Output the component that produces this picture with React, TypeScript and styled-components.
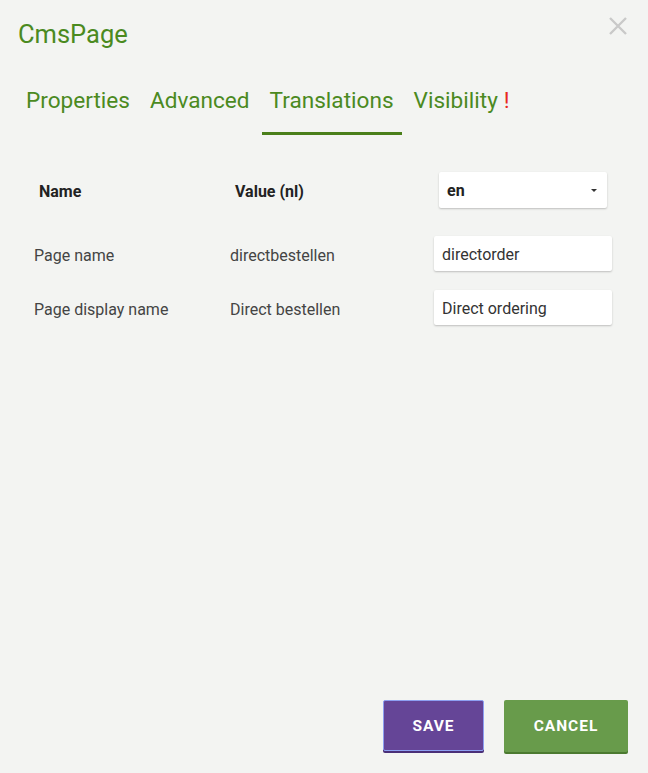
import React from "react";
import styled, { createGlobalStyle } from "styled-components";

const Global = createGlobalStyle`
  html, body { margin: 0; padding: 0; background: #f3f4f2; }
  body { font-family: Roboto, "Liberation Sans", sans-serif; }
`;

const Dialog = styled.div`
  height: 773px;
  box-sizing: border-box;
  display: flex;
  flex-direction: column;
  background: #f3f4f2;
`;

const Header = styled.div`
  display: flex;
  justify-content: space-between;
  align-items: flex-start;
  padding: 17px 21px 0 18px;
  height: 60px;
  box-sizing: border-box;
`;

const Title = styled.h1`
  margin: 0;
  font-weight: 400;
  font-size: 25.5px;
  line-height: 34px;
  color: #4b8a1f;
`;

const CloseButton = styled.button`
  border: 0;
  background: none;
  padding: 0;
  width: 18px;
  height: 18px;
  cursor: pointer;
  display: block;
`;

const Tabs = styled.div`
  display: flex;
  gap: 4px;
  padding: 20px 0 0 18px;
`;

const Tab = styled.div<{ $active?: boolean }>`
  padding: 1px 8px 0;
  height: 55px;
  box-sizing: border-box;
  font-size: 22.6px;
  line-height: 40px;
  color: #4b8a1f;
  border-bottom: 3px solid ${(p) => (p.$active ? "#4a7f1a" : "transparent")};
`;

const Alert = styled.span`
  color: #e8281e;
  margin-left: 6px;
`;

const Table = styled.div`
  padding: 37px 36px 0 34px;
  display: flex;
  flex-direction: column;
`;

const Row = styled.div<{ $head?: boolean }>`
  display: grid;
  grid-template-columns: 196px 204px 1fr;
  align-items: center;
  height: ${(p) => (p.$head ? "36px" : "35px")};
  margin-bottom: ${(p) => (p.$head ? "28px" : "19px")};
`;

const HeadCell = styled.div`
  padding-left: 5px;
  padding-top: 2px;
  font-weight: 700;
  font-size: 16px;
  color: #222;
`;

const Cell = styled.div`
  padding-top: 3px;
  font-size: 16px;
  color: #444;
`;

const Select = styled.div`
  margin-left: 5px;
  width: 168px;
  height: 36px;
  box-sizing: border-box;
  background: #fff;
  box-shadow: 0 1px 2px rgba(0, 0, 0, 0.22);
  border-radius: 2px;
  display: flex;
  align-items: center;
  justify-content: space-between;
  padding: 1px 10px 0 8px;
  font-weight: 700;
  font-size: 16px;
  color: #222;
`;

const Caret = styled.span`
  width: 0;
  height: 0;
  border-left: 3px solid transparent;
  border-right: 3px solid transparent;
  border-top: 3px solid #333;
`;

const Input = styled.input`
  width: 178px;
  height: 35px;
  box-sizing: border-box;
  border: 0;
  outline: none;
  background: #fff;
  box-shadow: 0 1px 2px rgba(0, 0, 0, 0.22);
  border-radius: 2px;
  padding: 1px 8px 0;
  font-family: Roboto, "Liberation Sans", sans-serif;
  font-size: 16px;
  color: #333;
`;

const Footer = styled.div`
  margin-top: auto;
  display: flex;
  justify-content: flex-end;
  gap: 20px;
  padding: 0 20px 21px 0;
`;

const Button = styled.button<{ $kind: "save" | "cancel" }>`
  height: ${(p) => (p.$kind === "save" ? "51px" : "52px")};
  width: ${(p) => (p.$kind === "save" ? "101px" : "124px")};
  box-sizing: border-box;
  border: ${(p) => (p.$kind === "save" ? "1px solid #8d9ff2" : "0")};
  border-radius: 2px;
  background: ${(p) => (p.$kind === "save" ? "#654597" : "#689b4b")};
  box-shadow: 0 2px 0 ${(p) => (p.$kind === "save" ? "#4a2f78" : "#4b7a30")};
  color: #fff;
  font-family: Roboto, "Liberation Sans", sans-serif;
  font-weight: 700;
  font-size: 15.5px;
  letter-spacing: 1px;
  text-transform: uppercase;
  cursor: pointer;
`;

export default function App() {
  return (
    <>
      <Global />
      <Dialog>
        <Header>
          <Title>CmsPage</Title>
          <CloseButton aria-label="close">
            <svg width="18" height="18" viewBox="0 0 18 18">
              <path d="M1 1L17 17M17 1L1 17" stroke="#c9c9c9" strokeWidth="2.4" strokeLinecap="butt" />
            </svg>
          </CloseButton>
        </Header>
        <Tabs>
          <Tab>Properties</Tab>
          <Tab>Advanced</Tab>
          <Tab $active>Translations</Tab>
          <Tab>
            Visibility<Alert>!</Alert>
          </Tab>
        </Tabs>
        <Table>
          <Row $head>
            <HeadCell>Name</HeadCell>
            <HeadCell>Value (nl)</HeadCell>
            <Select>
              en
              <Caret />
            </Select>
          </Row>
          <Row>
            <Cell>Page name</Cell>
            <Cell>directbestellen</Cell>
            <Input defaultValue="directorder" />
          </Row>
          <Row>
            <Cell>Page display name</Cell>
            <Cell>Direct bestellen</Cell>
            <Input defaultValue="Direct ordering" />
          </Row>
        </Table>
        <Footer>
          <Button $kind="save">Save</Button>
          <Button $kind="cancel">Cancel</Button>
        </Footer>
      </Dialog>
    </>
  );
}
